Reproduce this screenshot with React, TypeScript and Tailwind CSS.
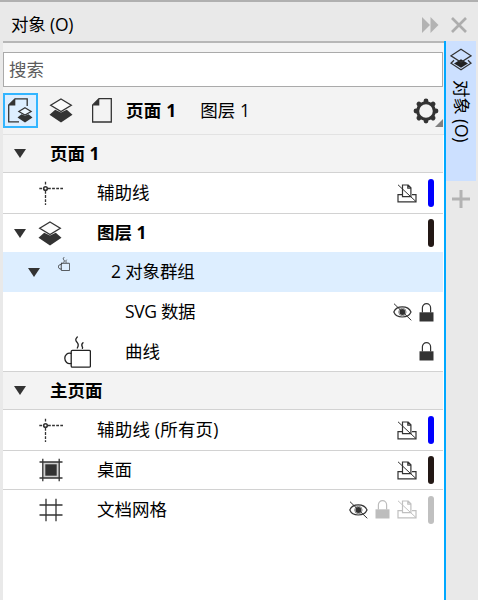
import React from 'react';
import { clsx } from 'clsx';

const ink = '#333333';

function Caret() {
  return (
    <svg width="12" height="9" viewBox="0 0 12 9" className="shrink-0">
      <path d="M0 0h12L6 9z" fill={ink} />
    </svg>
  );
}

function LayersIcon() {
  return (
    <svg width="24" height="25" viewBox="0 0 24 25" className="shrink-0">
      <path d="M.5 16.800 6.200 11.800l5.800 2.600 5.800-2.600 5.700 5L12 24.500z" fill={ink} />
      <path d="M12 1 22.300 7.300 12 13.600 1.700 7.300z" fill="#fbfbfb" stroke={ink} strokeWidth="1.300" />
    </svg>
  );
}

function ObjectsIcon() {
  return (
    <svg width="22" height="23" viewBox="0 0 22 23" className="shrink-0">
      <path d="m11 11.200 7 4.300-7 4.300-7-4.300z" fill="#222" />
      <path d="M4 12.300 1 15.200l10 6.600 10-6.600-3-2.900M11 1.200 21 7.800l-10 6.400L1 7.800z" fill="none" stroke={ink} strokeWidth="1.300" />
    </svg>
  );
}

function PageIcon() {
  return (
    <svg width="20" height="25" viewBox="0 0 20 25" className="shrink-0">
      <path d="M.6 24V7L7 .7h12.300V24z" fill="none" stroke={ink} strokeWidth="1.300" />
      <path d="M.5 7.500 7.300.5v7z" fill={ink} />
    </svg>
  );
}

function PageLayersIcon() {
  return (
    <svg width="25" height="25" viewBox="0 0 25 25" className="shrink-0">
      <path d="M11 23.800H.7V7L7 .8h12.200V8" fill="none" stroke={ink} strokeWidth="1.300" />
      <path d="M.5 7.500 7.300.5v7z" fill={ink} />
      <path d="m9.500 19.600 4-3.400 3.500 1.500 3.500-1.500 4 3.400-7.500 5z" fill={ink} />
      <path d="m17 9.700 6.200 3.700L17 17.100l-6.200-3.700z" fill="#eef6ff" stroke={ink} strokeWidth="1.200" />
    </svg>
  );
}

function GearIcon() {
  return (
    <svg width="26" height="26" viewBox="-13 -13 26 26" className="shrink-0">
      {[0, 45, 90, 135].map((angle) => (
        <path key={angle} d="M0-10v20" transform={`rotate(${angle})`} stroke={ink} strokeWidth="4.800" strokeLinecap="round" />
      ))}
      <circle r="8.300" fill="#f3f3f3" stroke={ink} strokeWidth="3" />
    </svg>
  );
}

function GuideIcon() {
  return (
    <svg width="24" height="24" viewBox="0 0 24 24" className="shrink-0">
      <g fill="none" stroke={ink} strokeWidth="1.300">
        <path d="M.3 7.500h4M9 7.500h15M6.500 .8v4M6.500 10v14" strokeDasharray="2.800 1.300" />
        <circle cx="6.500" cy="7.500" r="1.800" strokeWidth="1.600" />
      </g>
    </svg>
  );
}

function DesktopIcon() {
  return (
    <svg width="24" height="24" viewBox="0 0 24 24" className="shrink-0">
      <path d="M3.500 4h17v16h-17z" fill="#cfcfcf" />
      <path d="M.5 4h23M.5 20h23M3.800 .8v22.400M20.200 .8v22.400" stroke={ink} strokeWidth="1.300" />
      <path d="M6.300 6.300h11.400v11.400H6.300z" fill={ink} />
    </svg>
  );
}

function GridIcon() {
  return (
    <svg width="24" height="24" viewBox="0 0 24 24" className="shrink-0">
      <path d="M.5 7h23M.5 17h23M7 .7v22.600M17 .7v22.600" stroke={ink} strokeWidth="1.300" />
    </svg>
  );
}

function CupIcon({ className }: { className: string }) {
  return (
    <svg viewBox="0 0 27 32" className={clsx('shrink-0', className)} fill="none" stroke="#222" strokeWidth="1.300" strokeLinecap="round">
      <rect x="7.200" y="14.300" width="19.200" height="16.800" rx="1.200" />
      <path d="M7 17.300c-3.500-1-6.200 1.700-6.200 5s2.700 6.200 6.200 5.200" />
      <path d="M13.300 1c-2.200 2-1.800 3.800-.3 5.300s1.600 3.500.3 5.700M19 6.800c-1.700 1.500-1.300 3-.7 4s.5 1 .1 1.500" />
    </svg>
  );
}

function EyeOff() {
  return (
    <svg width="19" height="18" viewBox="0 0 19 18" className="shrink-0" fill="none" stroke={ink} strokeWidth="1.200">
      <path d="M.8 9c1.300-3.300 4.500-5.100 8.500-5.100s7.300 1.800 8.700 5.100c-1.400 3.300-4.700 5-8.700 5S2.100 12.300.8 9z" />
      <circle cx="9.400" cy="9" r="2.900" fill={ink} stroke="none" />
      <circle cx="9.400" cy="9" r="3.700" strokeWidth=".6" />
      <path d="M1 .7 18.300 17.300" strokeWidth="1" />
    </svg>
  );
}

function Lock({ color = ink }: { color?: string }) {
  return (
    <svg width="15" height="19" viewBox="0 0 15 19" className="shrink-0">
      <path d="M3.400 9.500v-4.700a4.100 4.100 0 0 1 8.200 0v4.700" fill="none" stroke={color} strokeWidth="1.200" />
      <path d="M.5 9.300h14v9.200H.5z" fill={color} />
    </svg>
  );
}

function PrinterOff({ color = ink }: { color?: string }) {
  return (
    <svg width="20" height="19" viewBox="0 0 20 19" className="shrink-0" fill="none" stroke={color} strokeWidth="1.200">
      <path d="M5 10.600H1v7.200h18v-7.200h-4" />
      <path d="M5.500 12.700V1h5.700l2.700 2.800v8.900zM10.800 1v3.200h3" />
      <path d="M1 .8 19 17.600" strokeWidth="1" />
    </svg>
  );
}

function Bar({ className }: { className: string }) {
  return <span className={clsx('h-[28px] w-[6px] shrink-0 rounded-full', className)} />;
}

const levels = {
  layer: { caret: 'w-9 pl-[11px]', icon: 'w-[58px]' },
  group: { caret: 'w-[55px] pl-[25px]', icon: 'w-[53px]' },
  item: { caret: 'w-[61px]', icon: 'w-[61px]' },
};

type RowProps = {
  label: string;
  className: string;
  level?: keyof typeof levels;
  icon?: React.ReactNode;
  open?: boolean;
  children?: React.ReactNode;
};

function Row({ label, className, level = 'layer', icon, open, children }: RowProps) {
  return (
    <div className={clsx('flex items-center border-[#d2d2d2]', className)}>
      <div className={clsx('flex shrink-0', levels[level].caret)}>{open && <Caret />}</div>
      <div className={clsx('flex shrink-0', levels[level].icon)}>{icon}</div>
      <span className="grow whitespace-pre">{label}</span>
      {children}
    </div>
  );
}

function Section({ label, className }: { label: string; className: string }) {
  return (
    <div className={clsx('flex items-center border-b border-[#d2d2d2] bg-[#f3f3f3] pl-[11px] font-bold', className)}>
      <Caret />
      <span className="ml-6">{label}</span>
    </div>
  );
}

export default function App() {
  return (
    <div className="flex h-[600px] w-[478px] flex-col overflow-hidden border-t-2 border-[#b0b0b0] bg-[#e9e9e9] font-['Open_Sans','Noto_Sans_CJK_SC',sans-serif] text-[17.5px] leading-none text-black">
      <header className="flex h-[39px] shrink-0 items-center pt-1.5 pl-[11px]">
        <span className="grow tracking-[-0.2px]">对象 (O)</span>
        <svg width="17" height="16" viewBox="0 0 17 16">
          <path d="M0 0l8 8-8 8zM8.500 0l8 8-8 8z" fill="#b3b3b3" />
        </svg>
        <svg width="16" height="16" viewBox="0 0 16 16" className="mr-[11px] ml-3">
          <path d="M1 1l14 14M15 1L1 15" stroke="#adadad" strokeWidth="2.700" />
        </svg>
      </header>

      <div className="flex min-h-0 grow">
        <main className="ml-[3px] flex w-[441px] shrink-0 flex-col border-t-2 border-[#b7b7b7] bg-white">
          <div className="h-[92px] shrink-0 border-b border-[#e2e2e2] bg-[#f3f3f3] pt-[9px]">
            <div className="flex h-[35px] w-[440px] items-center border border-[#aaaaaa] bg-white pl-[5px] text-[#5c5c5c]">搜索</div>
            <div className="flex h-[47px] items-center">
              <div className="flex size-[35px] items-center justify-center border-2 border-[#33b5ff] bg-[#ddeeff]">
                <PageLayersIcon />
              </div>
              <div className="ml-[11px]"><LayersIcon /></div>
              <div className="ml-[19px]"><PageIcon /></div>
              <span className="ml-[14px] font-bold tracking-[0.2px]">页面 1</span>
              <span className="ml-[24px] grow">图层 1</span>
              <GearIcon />
              <svg width="8" height="8" viewBox="0 0 8 8" className="mt-[25px] mr-[1px] -ml-[4px]">
                <path d="M8 0v8H0z" fill="#808080" />
              </svg>
            </div>
          </div>

          <div className="flex w-[440px] flex-col">
            <Section label="页面 1" className="h-[38px]" />
            <Row label="辅助线" icon={<GuideIcon />} className="h-[41px] border-b">
              <PrinterOff />
              <Bar className="mr-[9px] ml-[11px] bg-[#0000ff]" />
            </Row>
            <Row label="图层 1" icon={<div className="-ml-px"><LayersIcon /></div>} open className="h-[38px] font-bold">
              <Bar className="mr-[9px] bg-[#231815]" />
            </Row>
            <Row label="2 对象群组" level="group" icon={<CupIcon className="mb-4 h-[14px] w-[12px] stroke-[1.8]" />} open className="h-10 bg-[#ddeeff] tracking-[-0.15px]" />
            <Row label="SVG 数据" level="item" className="h-10 tracking-[-0.35px]">
              <EyeOff />
              <div className="mr-[9px] ml-[7px]"><Lock /></div>
            </Row>
            <Row label="曲线" level="item" icon={<CupIcon className="h-8 w-[27px]" />} className="h-10 border-b">
              <div className="mr-[9px]"><Lock /></div>
            </Row>
            <Section label="主页面" className="h-[38px]" />
            <Row label="辅助线 (所有页)" icon={<GuideIcon />} className="h-[41px] border-b tracking-[0.2px]">
              <PrinterOff />
              <Bar className="mr-[9px] ml-[11px] bg-[#0000ff]" />
            </Row>
            <Row label="桌面" icon={<DesktopIcon />} className="h-[39px] border-b">
              <PrinterOff />
              <Bar className="mr-[9px] ml-[11px] bg-[#231815]" />
            </Row>
            <Row label="文档网格" icon={<GridIcon />} className="h-[39px]">
              <EyeOff />
              <div className="mr-[7px] ml-[7px]"><Lock color="#bdbdbd" /></div>
              <PrinterOff color="#c0c0c0" />
              <Bar className="mr-[9px] ml-[11px] bg-[#c0c0c0]" />
            </Row>
          </div>
        </main>

        <aside className="flex grow flex-col border-l-2 border-[#00a8ff]">
          <div className="flex h-[140px] w-[30px] flex-col items-center bg-[#cce0ff] pt-[7px]">
            <ObjectsIcon />
            <span className="mt-[9px] tracking-[-0.2px] whitespace-nowrap [text-orientation:sideways] [writing-mode:vertical-rl]">对象 (O)</span>
          </div>
          <svg width="18" height="18" viewBox="0 0 18 18" className="mt-[9px] ml-[6px]">
            <path d="M9 0v18M0 9h18" stroke="#b3b3b3" strokeWidth="3" />
          </svg>
        </aside>
      </div>
    </div>
  );
}
